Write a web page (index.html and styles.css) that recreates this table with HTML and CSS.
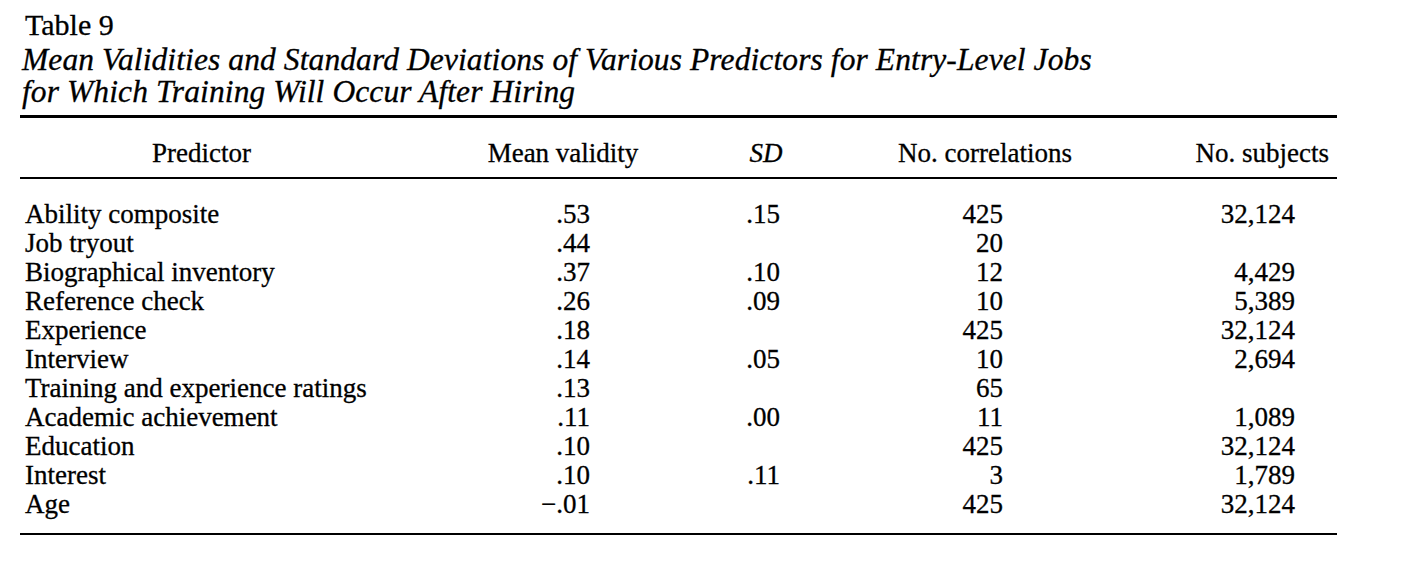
FILE: index.html
```html
<!DOCTYPE html>
<html lang="en">
<head>
<meta charset="utf-8">
<title>Table 9</title>
<link rel="stylesheet" href="styles.css">
</head>
<body>
<div class="page">
  <div class="label">Table 9</div>
  <div class="title">Mean Validities and Standard Deviations of Various Predictors for Entry-Level Jobs<br>for Which Training Will Occur After Hiring</div>
  <table class="data">
    <colgroup>
      <col class="c1"><col class="c2"><col class="c3"><col class="c4"><col class="c5">
    </colgroup>
    <thead>
      <tr>
        <th class="h-pred">Predictor</th>
        <th>Mean validity</th>
        <th><i>SD</i></th>
        <th>No. correlations</th>
        <th class="h-subj">No. subjects</th>
      </tr>
    </thead>
    <tbody>
      <tr><td>Ability composite</td><td class="mv">.53</td><td class="sd">.15</td><td class="nc">425</td><td class="ns">32,124</td></tr>
      <tr><td>Job tryout</td><td class="mv">.44</td><td class="sd"></td><td class="nc">20</td><td class="ns"></td></tr>
      <tr><td>Biographical inventory</td><td class="mv">.37</td><td class="sd">.10</td><td class="nc">12</td><td class="ns">4,429</td></tr>
      <tr><td>Reference check</td><td class="mv">.26</td><td class="sd">.09</td><td class="nc">10</td><td class="ns">5,389</td></tr>
      <tr><td>Experience</td><td class="mv">.18</td><td class="sd"></td><td class="nc">425</td><td class="ns">32,124</td></tr>
      <tr><td>Interview</td><td class="mv">.14</td><td class="sd">.05</td><td class="nc">10</td><td class="ns">2,694</td></tr>
      <tr><td>Training and experience ratings</td><td class="mv">.13</td><td class="sd"></td><td class="nc">65</td><td class="ns"></td></tr>
      <tr><td>Academic achievement</td><td class="mv">.11</td><td class="sd">.00</td><td class="nc">11</td><td class="ns">1,089</td></tr>
      <tr><td>Education</td><td class="mv">.10</td><td class="sd"></td><td class="nc">425</td><td class="ns">32,124</td></tr>
      <tr><td>Interest</td><td class="mv">.10</td><td class="sd">.11</td><td class="nc">3</td><td class="ns">1,789</td></tr>
      <tr><td>Age</td><td class="mv">&minus;.01</td><td class="sd"></td><td class="nc">425</td><td class="ns">32,124</td></tr>
    </tbody>
  </table>
</div>
</body>
</html>
```

FILE: styles.css
```css
html, body {
  margin: 0;
  padding: 0;
  background: #ffffff;
}

.page {
  padding: 9px 0 0 20px;
  width: 1317px;
  color: #000000;
  font-family: "Liberation Serif", "Times New Roman", serif;
  -webkit-text-stroke: 0.3px #000000;
}

.label {
  font-size: 30px;
  line-height: 32px;
  padding-left: 5px;
  margin-bottom: 3px;
}

.title {
  font-size: 31.5px;
  line-height: 32px;
  font-style: italic;
  letter-spacing: 0.1px;
  padding-left: 2px;
}

.data {
  margin-top: 7px;
  width: 1317px;
  table-layout: fixed;
  border-collapse: collapse;
  border-top: 3px solid #000000;
  border-bottom: 2px solid #000000;
  font-size: 27px;
  line-height: 29px;
}

.c1 { width: 443px; }
.c2 { width: 200px; }
.c3 { width: 206px; }
.c4 { width: 232px; }
.c5 { width: 236px; }

.data th {
  font-weight: normal;
  text-align: center;
  padding: 21px 0 9px 0;
  border-bottom: 2px solid #000000;
  white-space: nowrap;
}

.data th.h-pred {
  text-align: left;
  padding-left: 132px;
}

.data th.h-subj {
  text-align: right;
  padding-right: 8px;
}

.data td {
  padding: 0;
  height: 29px;
  white-space: nowrap;
}

.data td:first-child {
  padding-left: 5px;
}

.data tbody tr:first-child td {
  padding-top: 21px;
}

.data tbody tr:last-child td {
  padding-bottom: 14px;
}

.mv { text-align: right; padding-right: 73px !important; }
.sd { text-align: right; padding-right: 89px !important; }
.nc { text-align: right; padding-right: 98px !important; }
.ns { text-align: right; padding-right: 42px !important; }
```
